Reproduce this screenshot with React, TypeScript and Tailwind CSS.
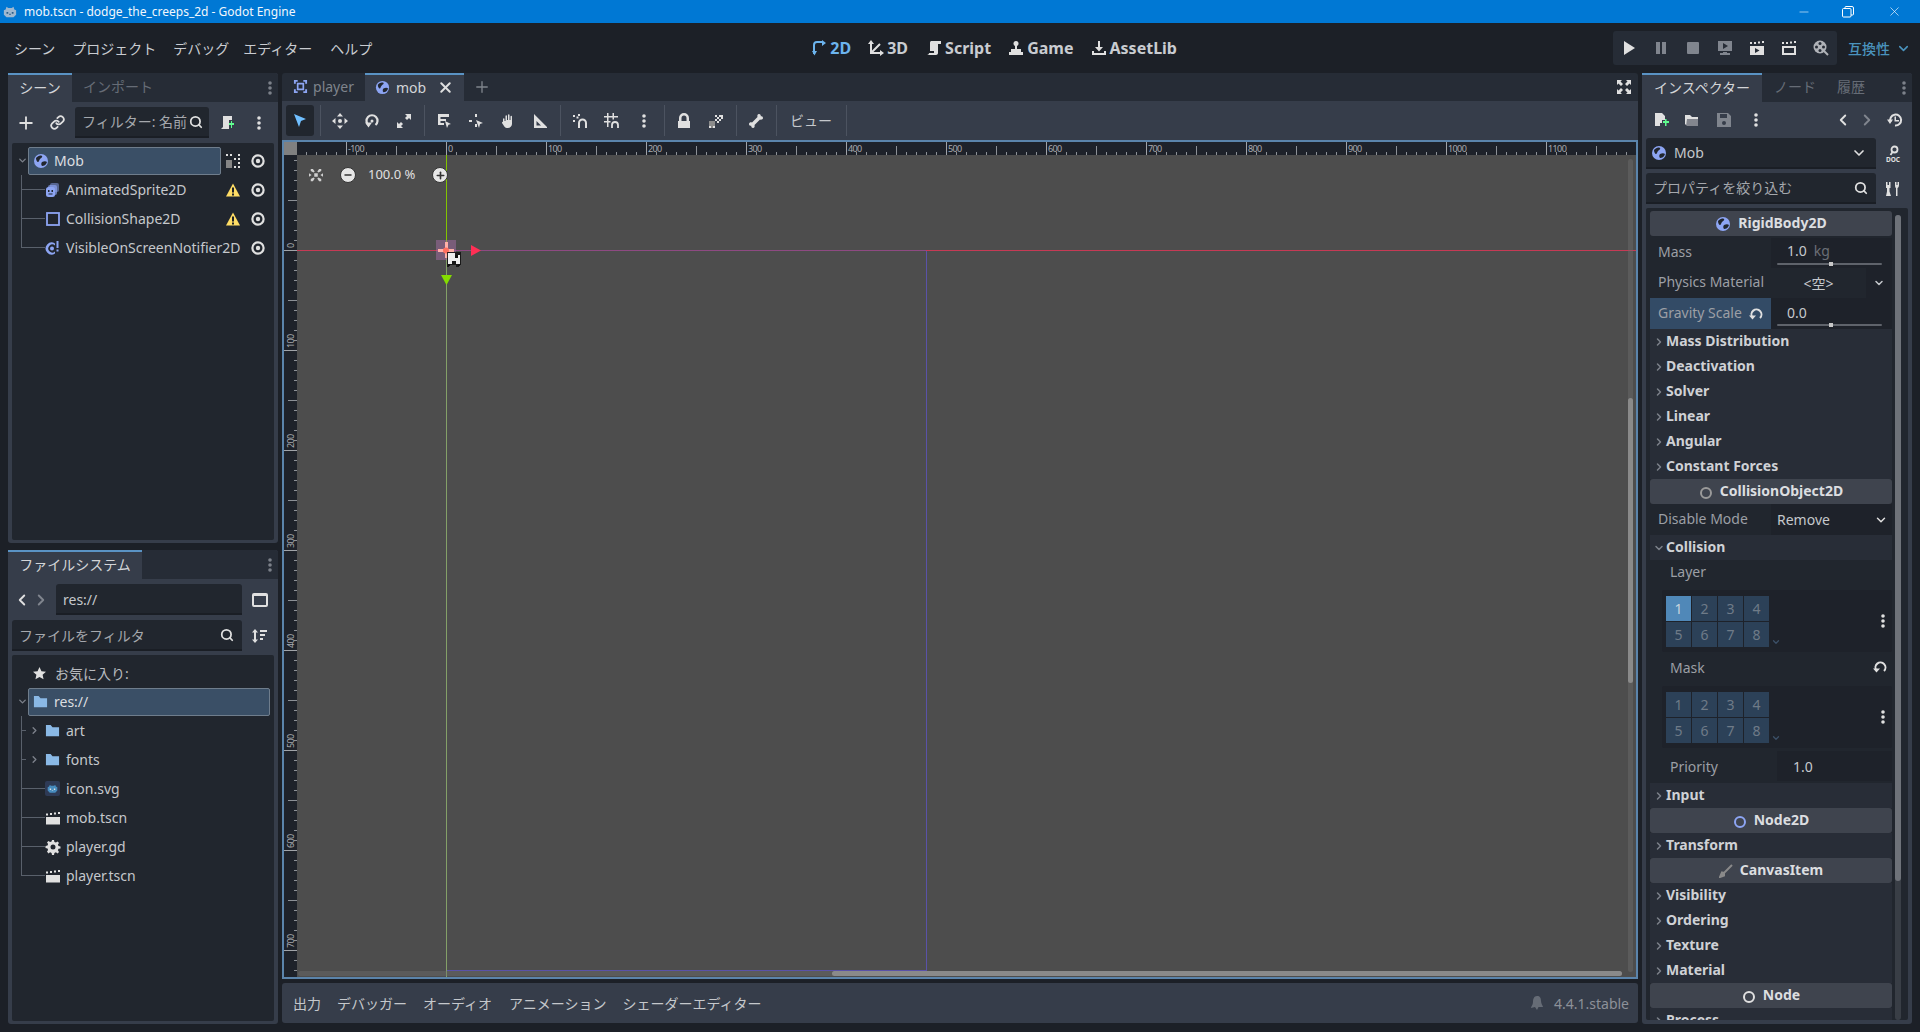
import React from "react";
import { ChevronDown, ChevronLeft, ChevronRight, Link, Minus, Plus, Search, X } from "lucide-react";

const jp = '"Noto Sans", "Noto Sans CJK JP", sans-serif';

type IconProps = { size?: number; fill?: string; children?: React.ReactNode };

const Ico = ({ size = 16, fill = "#e0e0e0", children }: IconProps) => (
  <svg width={size} height={size} viewBox="0 0 16 16" fill={fill} className="shrink-0">
    {children}
  </svg>
);

const Dots = ({ fill = "#e0e0e0" }: { fill?: string }) => (
  <Ico fill={fill}>
    <circle cx="8" cy="3" r="1.8" />
    <circle cx="8" cy="8" r="1.8" />
    <circle cx="8" cy="13" r="1.8" />
  </Ico>
);

const Eye = () => (
  <Ico>
    <circle cx="8" cy="8" r="5.6" fill="none" stroke="#e0e0e0" strokeWidth="2.2" />
    <circle cx="8" cy="8" r="2.2" />
  </Ico>
);

const Warn = () => (
  <Ico fill="#ffdd65">
    <path d="M8 1.5 15 14.5H1z" />
    <path d="M7 5.5h2v5H7zM7 11.5h2v2H7z" fill="#1c2027" />
  </Ico>
);

const Globe = ({ size = 16 }: { size?: number }) => (
  <Ico size={size} fill="#8da5f3">
    <circle cx="8" cy="8" r="7" />
    <path d="M3 5c2-2 4-3 6-2 1 1-1 2-2 3s-1 3-2 3-2-2-2-4zM9 9c2-1 4-1 5 0-1 3-3 4-5 4-1-1-1-3 0-4z" fill="#21262e" />
  </Ico>
);

const Folder = () => (
  <Ico fill="#8ab9e6" size={15}>
    <path d="M1 2h5l2 2.5h7V14H1z" />
  </Ico>
);

const Clap = () => (
  <Ico>
    <path d="M1 7h14v7.500H1z" />
    <path d="M1 3.500h2v2H1zM5 3h2v2H5zM9 2.500h2v2H9zM13 2h2v2h-2z" />
  </Ico>
);

const Gear = () => (
  <Ico>
    <path fillRule="evenodd" d="M7 1h2l.4 2 1.500.6L12.600 2.500 14 3.900l-1.100 1.700.6 1.400 2 .4v2l-2 .4-.6 1.500 1.100 1.700-1.400 1.400-1.700-1.100-1.500.6-.4 2H7l-.4-2-1.500-.6-1.700 1.100L2 12.600l1.100-1.700-.6-1.500-2-.4V7l2-.4.6-1.500L2 3.400 3.400 2l1.700 1.100L6.600 2.500zM8 5.500a2.500 2.500 0 1 0 0 5 2.500 2.500 0 0 0 0-5z" />
  </Ico>
);

const GodotIcon = () => (
  <div className="w-[15px] h-[15px] bg-[#2e3a55] rounded-[2px] flex items-center justify-center">
    <svg width="11" height="11" viewBox="0 0 16 16" fill="#478cbf">
      <path d="M1 6l2-1 1-2 2 1h4l2-1 1 2 2 1v5l-3 3H4l-3-3z" />
      <path d="M4 8h2v2H4zM10 8h2v2h-2zM7 10h2v1H7z" fill="#e0e0e0" />
    </svg>
  </div>
);

const Undo = ({ size = 16 }: { size?: number }) => (
  <Ico size={size}>
    <path d="M4.500 11.500A5 5 0 1 1 12 12" fill="none" stroke="#e0e0e0" strokeWidth="2" />
    <path d="M1 9.500h7l-3.500 4z" />
  </Ico>
);

const Field = ({ children, className }: { children: React.ReactNode; className: string }) => (
  <div className={`bg-[#21262e] border-b-2 border-[#1a1e25] rounded-t-[3px] flex items-center ${className}`}>{children}</div>
);

const PanelTabs = ({ children }: { children: React.ReactNode }) => (
  <div className="h-[29px] bg-[#262c36] flex items-stretch shrink-0 rounded-t-[3px]">{children}</div>
);

const ActiveTab = ({ label, w }: { label: string; w: string }) => (
  <div className={`${w} bg-[#363d4a] border-t-2 border-[#5a93c4] pb-[2px] flex items-center justify-center text-[#d3d5d8]`}>{label}</div>
);

const sceneNodes = [
  { label: "AnimatedSprite2D", last: false, warn: true, icon: "sprite" },
  { label: "CollisionShape2D", last: false, warn: true, icon: "shape" },
  { label: "VisibleOnScreenNotifier2D", last: true, warn: false, icon: "notifier" },
];

const NodeIcon = ({ kind }: { kind: string }) => {
  if (kind === "sprite")
    return (
      <Ico fill="#8da5f3">
        <rect x="5" y="1" width="9" height="9" rx="2" opacity=".5" />
        <rect x="3" y="3" width="9" height="10" rx="2" opacity=".7" />
        <rect x="1" y="5" width="9" height="10" rx="2.500" />
        <path d="M3 8h1.500v2H3zM6.500 8H8v2H6.500zM3.500 11.500h4v1h-4z" fill="#21262e" />
      </Ico>
    );
  if (kind === "shape")
    return (
      <Ico>
        <rect x="2" y="2" width="12" height="12" fill="none" stroke="#8da5f3" strokeWidth="1.800" />
      </Ico>
    );
  return (
    <Ico fill="#8da5f3">
      <path d="M10 3.500a6 6 0 1 0 0 10v-2a4 4 0 1 1 0-6z" />
      <circle cx="7" cy="8.500" r="2" />
      <path d="M11.500 1h2v7h-2zM11.500 9.500h2v2h-2z" />
    </Ico>
  );
};

const Guide = ({ last, x, w }: { last: boolean; x: number; w: number }) => (
  <svg width={w} height="29" className="shrink-0">
    <path d={`M${x}.5 0V${last ? 14.5 : 29}M${x} 14.5H${w}`} stroke="#59606b" fill="none" />
  </svg>
);

const SceneDock = () => (
  <div className="h-[470px] bg-[#363d4a] rounded-[3px] flex flex-col">
    <PanelTabs>
      <ActiveTab label="シーン" w="w-[64px]" />
      <div className="ml-[11px] pb-[2px] flex items-center text-[#666c76]">インポート</div>
      <div className="ml-auto flex items-center">
        <Dots fill="#7c818a" />
      </div>
    </PanelTabs>
    <div className="h-[41px] flex items-center pl-[8px] shrink-0">
      <Plus size={20} strokeWidth={2.200} color="#e0e0e0" className="mr-[14px]" />
      <Link size={15} strokeWidth={2.800} color="#e0e0e0" />
      <Field className="w-[134px] h-[31px] ml-[10px] pl-[7px] pr-[6px] justify-between overflow-hidden">
        <span className="text-[#a5a8ad] whitespace-nowrap">フィルター: 名前</span>
        <Search size={14} strokeWidth={3} color="#e0e0e0" className="shrink-0" />
      </Field>
      <div className="ml-[10px]">
        <svg width="16" height="16" viewBox="0 0 16 16" fill="#e0e0e0">
          <path d="M4 1h9v4h-3v9H2l2-2z" />
          <path d="M10 8h2V6h1v2h2v2h-2v3h-1v-3h-2z" fill="#5fff8f" />
        </svg>
      </div>
      <div className="ml-[16px]">
        <Dots />
      </div>
    </div>
    <div className="mx-[4px] bg-[#21262e] rounded-[2px] pt-[3px] flex-1">
      <div className="h-[29px] flex items-center">
        <div className="w-[16px] flex justify-end shrink-0">
          <ChevronDown size={11} strokeWidth={3} color="#7c818a" />
        </div>
        <div className="w-[193px] h-[28px] bg-[#3a4f66] border border-[#6f7d8c] rounded-[2px] flex items-center pl-[4px] gap-[5px] text-[#dcdee0] shrink-0">
          <Globe />
          Mob
        </div>
        <div className="ml-[4px] w-[16px]">
          <svg width="16" height="16" viewBox="0 0 16 16" fill="#e0e0e0">
            <path d="M1 1h2v2H1zM5 1h2v2H5zM13 1h2v2h-2zM9 5h2v2H9zM13 5h2v2h-2zM13 9h2v2h-2zM13 13h2v2h-2zM9 13h2v2H9z" />
            <path d="M1 7h6v8H1z" fill="#858585" />
          </svg>
        </div>
        <div className="ml-[9px]">
          <Eye />
        </div>
      </div>
      {sceneNodes.map((n) => (
        <div key={n.label} className="h-[29px] flex items-center text-[#c5c8cc]">
          <Guide last={n.last} x={9} w={33} />
          <NodeIcon kind={n.icon} />
          <span className="ml-[5px] w-[159px] shrink-0 whitespace-nowrap">{n.label}</span>
          <div className="w-[16px] shrink-0">{n.warn && <Warn />}</div>
          <div className="ml-[9px]">
            <Eye />
          </div>
        </div>
      ))}
    </div>
    <div className="h-[3px] shrink-0" />
  </div>
);

const files = [
  { label: "art", folder: true, last: false },
  { label: "fonts", folder: true, last: false },
  { label: "icon.svg", icon: <GodotIcon />, last: false },
  { label: "mob.tscn", icon: <Clap />, last: false },
  { label: "player.gd", icon: <Gear />, last: false },
  { label: "player.tscn", icon: <Clap />, last: true },
];

const FileDock = () => (
  <div className="flex-1 bg-[#363d4a] rounded-[3px] flex flex-col">
    <PanelTabs>
      <ActiveTab label="ファイルシステム" w="w-[134px]" />
      <div className="ml-auto flex items-center">
        <Dots fill="#7c818a" />
      </div>
    </PanelTabs>
    <div className="flex items-center h-[41px] shrink-0 pl-[5px]">
      <ChevronLeft size={18} strokeWidth={2.500} color="#e0e0e0" />
      <ChevronRight size={18} strokeWidth={2.500} color="#80858e" className="ml-[1px]" />
      <Field className="w-[186px] h-[31px] ml-[6px] pl-[7px] pt-[1px] text-[#c5c8cc]">res://</Field>
      <div className="ml-[10px] w-[16px] h-[14px] border-2 border-t-[3px] border-[#e0e0e0] rounded-[2px]" />
    </div>
    <div className="flex items-center h-[31px] shrink-0 pl-[4px]">
      <Field className="w-[230px] h-[31px] pl-[7px] pr-[8px] pt-[1px] justify-between text-[#a5a8ad]">
        ファイルをフィルタ
        <Search size={14} strokeWidth={3} color="#e0e0e0" />
      </Field>
      <svg width="16" height="16" viewBox="0 0 16 16" fill="#e0e0e0" className="ml-[10px]">
        <path d="M3 1l3 3.500H4v7h2L3 15 0 11.500h2v-7H0zM8 2h7v2H8zM8 6h5v2H8zM8 10h3v2H8z" />
      </svg>
    </div>
    <div className="mx-[4px] mt-[4px] mb-[3px] bg-[#21262e] rounded-[2px] pt-[4px] flex-1 text-[#c5c8cc]">
      <div className="h-[28px] flex items-center pl-[21px] gap-[9px] text-[#b7babf]">
        <Ico size={13}>
          <path d="M8 0l2.400 5.200 5.600.6-4.200 3.800 1.200 5.600L8 12.400 3 15.200l1.200-5.600L0 5.800l5.600-.6z" />
        </Ico>
        お気に入り:
      </div>
      <div className="h-[29px] flex items-center">
        <div className="w-[16px] flex justify-end shrink-0">
          <ChevronDown size={11} strokeWidth={3} color="#7c818a" />
        </div>
        <div className="w-[242px] h-[28px] bg-[#3a4f66] border border-[#6f7d8c] rounded-[2px] flex items-center pl-[4px] gap-[6px] text-[#dcdee0]">
          <Folder />
          res://
        </div>
      </div>
      {files.map((f) => (
        <div key={f.label} className="h-[29px] flex items-center">
          {f.folder ? (
            <div className="w-[33px] flex items-center shrink-0">
              <svg width="22" height="29" className="shrink-0">
                <path d="M9.500 0V29M9 14.500H14" stroke="#59606b" fill="none" />
              </svg>
              <ChevronRight size={11} strokeWidth={3} color="#7c818a" className="-ml-[5px]" />
            </div>
          ) : (
            <Guide last={f.last} x={9} w={33} />
          )}
          <div className="w-[15px] flex justify-center shrink-0">{f.folder ? <Folder /> : f.icon}</div>
          <span className="ml-[6px]">{f.label}</span>
        </div>
      ))}
    </div>
  </div>
);

const ToolBtn = ({ children, active }: { children: React.ReactNode; active?: boolean }) => (
  <div className="w-[32px] h-[39px] flex items-center justify-center shrink-0">
    {active ? <div className="w-[28px] h-[31px] bg-[#21262e] rounded-[3px] flex items-center justify-center">{children}</div> : children}
  </div>
);

const Sep = () => (
  <div className="w-[8px] h-[31px] flex justify-center shrink-0">
    <div className="w-[1px] bg-[#4c5360]" />
  </div>
);

const Toolbar = () => (
  <div className="h-[39px] bg-[#363d4a] flex items-center pl-[2px] shrink-0">
    <ToolBtn active>
      <Ico fill="#70bfff">
        <path d="M2 1l12 5-5 2-2 6z" />
      </Ico>
    </ToolBtn>
    <Sep />
    <ToolBtn>
      <Ico>
        <path d="M8 0l3 3.500H5zM8 16l-3-3.500h6zM0 8l3.500-3v6zM16 8l-3.500 3V5z" />
        <circle cx="8" cy="8" r="2" />
      </Ico>
    </ToolBtn>
    <ToolBtn>
      <Ico>
        <path d="M4.500 12A5.500 5.500 0 1 1 11.500 12" fill="none" stroke="#e0e0e0" strokeWidth="2.200" />
        <path d="M1 9.500h7l-3.500 5z" />
        <circle cx="8" cy="8" r="1.500" />
      </Ico>
    </ToolBtn>
    <ToolBtn>
      <Ico>
        <path d="M9 1h6v6l-2-2-2 2-2-2 2-2zM1 9l2 2 2-2 2 2-2 2 2 2H1z" />
      </Ico>
    </ToolBtn>
    <Sep />
    <ToolBtn>
      <Ico>
        <path d="M2 1h11v3H4.500v2H10v2H4.500v2H8v2H2z" />
        <path d="M9 8l6 3-2.500.8L11 15z" />
      </Ico>
    </ToolBtn>
    <ToolBtn>
      <Ico>
        <path d="M7 1h2v3H7zM1 7h3v2H1zM7 11h2v3H7z" />
        <path d="M8 7l7 3-3 1-1 4z" />
      </Ico>
    </ToolBtn>
    <ToolBtn>
      <Ico>
        <path d="M3 8V6c0-1 1.500-1 1.500 0v2h1V3c0-1 1.500-1 1.500 0v4h1V2c0-1 1.500-1 1.500 0v5h1V3.500c0-1 1.500-1 1.500 0V11c0 2-2 4-4 4H7c-2 0-3-2-5-5 0-1 .500-1.500 1-1z" />
      </Ico>
    </ToolBtn>
    <ToolBtn>
      <Ico>
        <path fillRule="evenodd" d="M2 1l13 13v1H2zM4.500 8v4.500H9z" />
      </Ico>
    </ToolBtn>
    <Sep />
    <ToolBtn>
      <Ico>
        <path d="M7 15v-5a3.500 3.500 0 0 1 7 0v5" fill="none" stroke="#e0e0e0" strokeWidth="2" />
        <path d="M1 2h2v2H1zM6 1h2v2H6zM1 7h2v2H1zM4.500 3.500h2v2h-2z" />
      </Ico>
    </ToolBtn>
    <ToolBtn>
      <Ico>
        <path d="M3 0h1.500v3h4V0H10v3h4v1.500h-4v2H8.500v-2h-4v3.500h2v1.500h-2V14H3V9.500H0V8h3V4.500H0V3h3z" />
        <path d="M8 15v-3a3 3 0 0 1 6 0v3" fill="none" stroke="#e0e0e0" strokeWidth="1.800" />
      </Ico>
    </ToolBtn>
    <ToolBtn>
      <Dots />
    </ToolBtn>
    <Sep />
    <ToolBtn>
      <Ico>
        <path d="M3 8V5a5 5 0 0 1 10 0v3h1v7H2V8zm2.500 0h5V5a2.500 2.500 0 0 0-5 0z" />
      </Ico>
    </ToolBtn>
    <ToolBtn>
      <Ico>
        <path d="M1 8h6v7H1z" fill="#8b8b8b" />
        <path d="M7 2h2v2H7zM11 2h4v2h-4zM9 4h2v2H9zM13 4h2v2h-2zM7 6h2v2H7zM11 6h2v2h-2zM9 8h2v2H9zM1 13h2v2H1zM5 13h2v2H5z" />
      </Ico>
    </ToolBtn>
    <Sep />
    <ToolBtn>
      <Ico>
        <path d="M11 1c1.500 0 1.800 1 1.800 2.200C14 3.200 15 3.500 15 5c0 1.500-1.800 2-3 1.500L6.500 12c.5 1.200 0 3-1.500 3-1.400 0-1.800-1-1.800-2.200C2 12.800 1 12.500 1 11c0-1.500 1.800-2 3-1.500L9.500 4C9 2.800 9.500 1 11 1z" />
      </Ico>
    </ToolBtn>
    <Sep />
    <div className="px-[10px] text-[#c5c8cc]">ビュー</div>
    <Sep />
  </div>
);

const major = (v: number) => v % 100 === 0;
const range = (from: number, to: number) => {
  const out: number[] = [];
  for (let v = from; v <= to; v += 10) out.push(v);
  return out;
};

const TopRuler = () => (
  <svg width="1339" height="13" className="block" fontFamily="Noto Sans" fontSize="9" fill="#a8abb0">
    {range(-140, 1180).map((v) => {
      const h = major(v) ? 13 : v % 50 === 0 ? 9 : 3;
      return <rect key={v} x={149 + v} y={13 - h} width="1" height={h} fill={major(v) ? "#a0a3a8" : "#8c9096"} />;
    })}
    {range(-100, 1100)
      .filter(major)
      .map((v) => (
        <text key={v} x={151 + v} y="10" letterSpacing="-.6">
          {v}
        </text>
      ))}
  </svg>
);

const LeftRuler = () => (
  <svg width="13" height="822" className="block shrink-0" fontFamily="Noto Sans" fontSize="9" fill="#a8abb0">
    {range(-90, 720).map((v) => {
      const w = major(v) ? 13 : v % 50 === 0 ? 9 : 3;
      return <rect key={v} x={13 - w} y={95 + v} width={w} height="1" fill={major(v) ? "#a0a3a8" : "#8c9096"} />;
    })}
    {range(0, 700)
      .filter(major)
      .map((v) => (
        <text key={v} transform={`translate(10 ${93 + v}) rotate(-90)`} letterSpacing="-.6">
          {v}
        </text>
      ))}
  </svg>
);

const Circle = ({ children }: { children: React.ReactNode }) => (
  <div className="w-[16px] h-[16px] rounded-full bg-[#e6e6e6] flex items-center justify-center border border-[#333]">{children}</div>
);

const Viewport = () => (
  <div className="h-[839px] border-2 border-[#5b84ab] shrink-0 flex flex-col overflow-hidden">
    <div className="h-[13px] flex shrink-0 bg-[#1e222a]">
      <div className="w-[13px] bg-[#808080] shrink-0" />
      <TopRuler />
    </div>
    <div className="flex flex-1 min-h-0">
      <div className="bg-[#1e222a] shrink-0">
        <LeftRuler />
      </div>
      <div className="relative flex-1 bg-[#4d4d4d]">
        <div className="absolute left-0 top-[95px] h-[1px] w-[149px] bg-[#c63a55]" />
        <div className="absolute left-[149px] top-[95px] h-[1px] w-[480px] bg-[#8e4a82]" />
        <div className="absolute left-[629px] top-[95px] h-[1px] right-0 bg-[#c63a55]" />
        <div className="absolute left-[149px] top-0 h-[95px] w-[1px] bg-[#82c400]" />
        <div className="absolute left-[149px] top-[96px] bottom-0 w-[1px] bg-[#84a068]" />
        <div className="absolute left-[629px] top-[96px] h-[720px] w-[1px] bg-[#5a52a8]" />
        <div className="absolute left-[150px] top-[815px] h-[1px] w-[479px] bg-[#5a52a8]" />
        <div className="absolute left-[139px] top-[85px]">
          <svg width="40" height="40" viewBox="0 0 40 40">
            <rect width="20" height="20" fill="#b070b0" opacity=".45" />
            <path d="M9 2h3v6H9zM9 12h3v6H9zM2 9h6v3H2zM12 9h6v3h-6z" fill="#ffb0a8" />
            <circle cx="10" cy="10.500" r="3" fill="#ff7060" />
            <path d="M11 12h14v13h-2v2h-3v-2h-7v2h-2z" fill="#111" opacity=".85" />
            <path d="M12 13h7v2h5v9h-4v-3h-4v3h-4z" fill="#eee" />
            <path d="M19 15h3v3h-3zM22 24h2v2h-2zM12 24h2v2h-2z" fill="#111" />
          </svg>
        </div>
        <div className="absolute left-[174px] top-[90px]">
          <svg width="11" height="11">
            <path d="M0 0l10 5.500L0 11z" fill="#ff2f55" />
          </svg>
        </div>
        <div className="absolute left-[144px] top-[120px]">
          <svg width="11" height="10">
            <path d="M0 0h11L5.500 10z" fill="#84dc00" />
          </svg>
        </div>
        <div className="absolute left-[12px] top-[12px] flex items-center h-[16px] text-[13px] text-[#e0e0e0]">
          <Ico size={14} fill="#d0d0d0">
            <path d="M2 1h2.500l2 3-1.200 1.200L2 3.500zM14 1h-2.500l-2 3 1.200 1.200L14 3.500zM2 15h2.500l2-3-1.200-1.200L2 12.500zM14 15h-2.500l-2-3 1.200-1.200 3.300 1.700z" />
            <path d="M0 6l3 2-3 2zM16 6l-3 2 3 2z" />
            <rect x="6" y="6" width="4" height="4" />
          </Ico>
          <div className="ml-[17px]">
            <Circle>
              <Minus size={10} strokeWidth={4} color="#333" />
            </Circle>
          </div>
          <span className="ml-[12px] w-[64px]">100.0 %</span>
          <Circle>
            <Plus size={11} strokeWidth={3.500} color="#333" />
          </Circle>
        </div>
        <div className="absolute left-[1px] right-[14px] top-[816px] h-[5px] bg-[#707070]/40 rounded-full">
          <div className="absolute left-[534px] right-0 h-[5px] rounded-full bg-[#8a8a8a]" />
        </div>
        <div className="absolute left-[1331px] top-[4px] bottom-[5px] w-[5px] bg-[#707070]/40 rounded-full">
          <div className="absolute top-[239px] h-[285px] w-[5px] rounded-full bg-[#8a8a8a]" />
        </div>
      </div>
    </div>
  </div>
);

const CenterColumn = () => (
  <div className="w-[1356px] flex flex-col shrink-0">
    <div className="h-[28px] bg-[#262c36] flex items-stretch shrink-0 rounded-t-[3px]">
      <div className="w-[83px] pb-[2px] flex items-center justify-center gap-[5px] text-[#7f848c]">
        <Ico size={15} fill="#8da5f3">
          <path d="M1 1h4v2H3v2H1zM11 1h4v4h-2V3h-2zM1 11h2v2h2v2H1zM13 11h2v4h-4v-2h2z" />
          <path d="M5 5h6v6H5z" fill="none" stroke="#8da5f3" strokeWidth="1.800" />
        </Ico>
        player
      </div>
      <div className="w-[99px] bg-[#363d4a] border-t-2 border-[#5a93c4] pb-[2px] flex items-center pl-[10px] text-[#d3d5d8]">
        <Globe size={15} />
        <span className="ml-[6px]">mob</span>
        <X size={17} strokeWidth={2.800} color="#e0e0e0" className="ml-[11px]" />
      </div>
      <div className="flex items-center ml-[9px]">
        <Plus size={18} strokeWidth={1.800} color="#7f848c" />
      </div>
      <div className="ml-auto flex items-center mr-[6px]">
        <Ico>
          <path d="M1 1h5L4.500 2.500 7 5 5 7 2.500 4.500 1 6zM15 1v5l-1.500-1.500L11 7 9 5l2.500-2.500L10 1zM1 15v-5l1.500 1.500L5 9l2 2-2.500 2.500L6 15zM15 15h-5l1.500-1.500L9 11l2-2 2.500 2.500L15 10z" />
        </Ico>
      </div>
    </div>
    <Toolbar />
    <Viewport />
    <div className="mt-[4px] h-[40px] bg-[#363d4a] rounded-[3px] flex items-center text-[#c5c8cc] shrink-0">
      <span className="ml-[11px]">出力</span>
      <span className="ml-[16px]">デバッガー</span>
      <span className="ml-[16px]">オーディオ</span>
      <span className="ml-[17px]">アニメーション</span>
      <span className="ml-[16px]">シェーダーエディター</span>
      <div className="ml-auto flex items-center mr-[9px] text-[#8d9199]">
        <Ico fill="#666c76">
          <path d="M8 1c3 0 4 2 4 5 0 3 2 5 2 6H9.500L8 15 6 12l-4 1c0-2 2-3 2-6s1-6 4-6z" />
        </Ico>
        <span className="ml-[9px]">4.4.1.stable</span>
      </div>
    </div>
  </div>
);

const Header = ({ icon, label }: { icon: React.ReactNode; label: string }) => (
  <div className="h-[25px] bg-[#3f444e] rounded-[3px] flex items-center justify-center gap-[7px] font-bold text-[#dcdee0] shrink-0">
    {icon}
    <span className="pb-[2px]">{label}</span>
  </div>
);

const Section = ({ label, open }: { label: string; open?: boolean }) => (
  <div className="h-[25px] bg-[#282d37] flex items-center font-bold text-[#cfd1d5] shrink-0 pl-[3px]">
    {open ? <ChevronDown size={12} strokeWidth={3} color="#7c818a" /> : <ChevronRight size={12} strokeWidth={3} color="#7c818a" />}
    <span className="ml-[1px] pb-[3px]">{label}</span>
  </div>
);

const Label = ({ children }: { children: React.ReactNode }) => <div className="text-[#9c9fa5] pl-[8px] pb-[3px]">{children}</div>;

const Slider = () => (
  <div className="relative ml-[6px] mr-[10px] mt-[1px] h-[2px] bg-[#5f636b] rounded">
    <div className="absolute left-[52px] -top-[1px] w-[4px] h-[4px] bg-[#c8c8c8]" />
  </div>
);

const LayerGrid = ({ active }: { active?: boolean }) => (
  <div className="h-[62px] ml-[12px] bg-[#1e222a] rounded-[2px] flex items-center pl-[4px] pr-[1px] shrink-0">
    <div className="grid grid-cols-4 gap-[1px] w-[103px] text-[#6f7b88]">
      {[1, 2, 3, 4, 5, 6, 7, 8].map((n) => (
        <div key={n} className={`h-[25px] flex items-center justify-center ${active && n === 1 ? "bg-[#5088b8] text-[#c8d4de]" : "bg-[#2c4158]"}`}>
          {n}
        </div>
      ))}
    </div>
    <ChevronDown size={10} strokeWidth={3} color="#3c5068" className="self-end mb-[5px] ml-[2px]" />
    <div className="ml-auto">
      <Dots />
    </div>
  </div>
);

const Inspector = () => (
  <div className="w-[270px] bg-[#363d4a] rounded-[3px] flex flex-col shrink-0">
    <PanelTabs>
      <ActiveTab label="インスペクター" w="w-[120px]" />
      <div className="ml-[12px] pb-[2px] flex items-center text-[#666c76]">ノード</div>
      <div className="ml-[21px] pb-[2px] flex items-center text-[#666c76]">履歴</div>
      <div className="ml-auto flex items-center">
        <Dots fill="#7c818a" />
      </div>
    </PanelTabs>
    <div className="h-[36px] flex items-center pl-[11px] pr-[9px] shrink-0">
      <svg width="16" height="16" viewBox="0 0 16 16" fill="#e0e0e0" className="shrink-0">
        <path d="M2 1h7l3 3v4H9v3H7v3H2z" />
        <path d="M10 9h2V7h1.500v2H16v2h-2.500v3H12v-3h-2z" fill="#5fff8f" />
      </svg>
      <div className="ml-[15px]">
        <Ico>
          <path d="M1 3h5l2 2h6v9H3L1 12z" />
          <path d="M3 7h13l-2 7H2z" fill="#363d4a" opacity=".55" />
        </Ico>
      </div>
      <div className="ml-[16px]">
        <Ico fill="#80858e">
          <path fillRule="evenodd" d="M1 1h11l3 3v11H1zM4 2v4h7V2zM8 9a2 2 0 1 0 0 4 2 2 0 0 0 0-4z" />
        </Ico>
      </div>
      <div className="ml-[16px]">
        <Dots />
      </div>
      <ChevronLeft size={18} strokeWidth={2.500} color="#e0e0e0" className="ml-auto" />
      <ChevronRight size={18} strokeWidth={2.500} color="#80858e" className="ml-[6px]" />
      <div className="ml-[11px]">
        <Ico>
          <path d="M3.500 10A5.500 5.500 0 1 1 8 13.500" fill="none" stroke="#e0e0e0" strokeWidth="2" />
          <path d="M0 7.500h6L3 12zM7.500 4.500H9v3.500h3v1.500H7.500z" />
        </Ico>
      </div>
    </div>
    <div className="flex items-center pl-[4px] h-[31px] shrink-0">
      <Field className="w-[230px] h-[31px] pl-[5px] pr-[9px] text-[#c5c8cc]">
        <Globe />
        <span className="ml-[7px]">Mob</span>
        <ChevronDown size={16} strokeWidth={2.500} color="#e0e0e0" className="ml-auto" />
      </Field>
      <div className="ml-[9px]">
        <svg width="16" height="18" viewBox="0 0 16 18" fill="#e0e0e0">
          <circle cx="9.500" cy="4.500" r="3" fill="none" stroke="#e0e0e0" strokeWidth="1.800" />
          <path d="M7.500 7l-2 3" stroke="#e0e0e0" strokeWidth="1.800" />
          <text x="8" y="16.500" fontSize="6.500" fontWeight="700" textAnchor="middle" fontFamily="Noto Sans">
            DOC
          </text>
        </svg>
      </div>
    </div>
    <div className="flex items-center pl-[4px] h-[31px] mt-[4px] shrink-0">
      <Field className="w-[230px] h-[31px] pl-[7px] pr-[8px] justify-between text-[#a5a8ad]">
        プロパティを絞り込む
        <Search size={14} strokeWidth={3} color="#e0e0e0" />
      </Field>
      <div className="ml-[9px]">
        <Ico>
          <path d="M1 1h1.500v3H4V1h1.500v6H4.500v3.500L6 15H1l1-4.500V7H1zM10 1h1.500v3h1V1H14v3c0 2-1 3-1.500 3v8H11V7c-.5 0-1-1-1-3z" />
        </Ico>
      </div>
    </div>
    <div className="mx-[4px] mt-[4px] mb-[4px] flex-1 min-h-0 bg-[#21262e] rounded-[2px] flex pl-[4px] pt-[3px] overflow-hidden text-[#c5c8cc]">
      <div className="w-[242px] flex flex-col shrink-0">
        <Header icon={<Globe />} label="RigidBody2D" />
        <div className="h-[31px] mt-[1px] flex items-center shrink-0">
          <div className="w-[121px]">
            <Label>Mass</Label>
          </div>
          <div className="w-[121px] h-[30px] bg-[#1e222a] pt-[2px]">
            <div className="h-[22px] flex items-center pl-[16px] gap-[7px]">
              1.0 <span className="text-[#6b6f76]">kg</span>
            </div>
            <Slider />
          </div>
        </div>
        <div className="h-[30px] flex items-center shrink-0">
          <div className="w-[121px]">
            <Label>Physics Material</Label>
          </div>
          <div className="w-[95px] text-center text-[#c5c8cc]">&lt;空&gt;</div>
          <div className="w-[26px] h-[30px] bg-[#1e222a] flex items-center justify-center">
            <ChevronDown size={12} strokeWidth={3} color="#c5c8cc" />
          </div>
        </div>
        <div className="h-[31px] flex items-center shrink-0">
          <div className="w-[121px] h-[31px] bg-[#334b66] flex items-center justify-between pr-[7px]">
            <Label>Gravity Scale</Label>
            <Undo />
          </div>
          <div className="w-[121px] h-[31px] bg-[#1e222a] pt-[4px]">
            <div className="h-[21px] flex items-center pl-[16px]">0.0</div>
            <Slider />
          </div>
        </div>
        <Section label="Mass Distribution" />
        <Section label="Deactivation" />
        <Section label="Solver" />
        <Section label="Linear" />
        <Section label="Angular" />
        <Section label="Constant Forces" />
        <Header
          icon={
            <svg width="14" height="14" className="mt-[2px]">
              <circle cx="7" cy="7" r="5" fill="none" stroke="#9a9a9a" strokeWidth="2" />
            </svg>
          }
          label="CollisionObject2D"
        />
        <div className="h-[31px] flex items-center shrink-0">
          <div className="w-[121px]">
            <Label>Disable Mode</Label>
          </div>
          <div className="w-[121px] h-[31px] bg-[#1e222a] flex items-center pl-[6px] pr-[4px] justify-between">
            Remove
            <ChevronDown size={14} strokeWidth={2.500} color="#e0e0e0" />
          </div>
        </div>
        <Section label="Collision" open />
        <div className="h-[30px] flex items-center pl-[20px] pb-[7px] text-[#9c9fa5] shrink-0">Layer</div>
        <LayerGrid active />
        <div className="h-[34px] flex items-center justify-between pl-[20px] pr-[4px] pb-[4px] text-[#9c9fa5] shrink-0">
          Mask
          <Undo />
        </div>
        <LayerGrid />
        <div className="h-[35px] pt-[3px] flex items-start shrink-0">
          <div className="w-[127px] h-[30px] flex items-center pl-[20px] text-[#9c9fa5]">Priority</div>
          <div className="w-[115px] h-[30px] bg-[#1e222a] flex items-center pl-[16px]">1.0</div>
        </div>
        <Section label="Input" />
        <Header
          icon={
            <svg width="14" height="14" className="mt-[2px]">
              <circle cx="7" cy="7" r="5" fill="none" stroke="#8da5f3" strokeWidth="2" />
            </svg>
          }
          label="Node2D"
        />
        <Section label="Transform" />
        <Header
          icon={
            <svg width="14" height="14" viewBox="0 0 14 14">
              <path d="M13 1L5 9l-2-.5L1 13l4-1.500L5 9" fill="#8a8a8a" stroke="#8a8a8a" strokeWidth="2" />
            </svg>
          }
          label="CanvasItem"
        />
        <Section label="Visibility" />
        <Section label="Ordering" />
        <Section label="Texture" />
        <Section label="Material" />
        <Header
          icon={
            <svg width="14" height="14" className="mt-[2px]">
              <circle cx="7" cy="7" r="5" fill="none" stroke="#e0e0e0" strokeWidth="2" />
            </svg>
          }
          label="Node"
        />
        <Section label="Process" />
      </div>
      <div className="ml-[3px] w-[6px] bg-[#5f636b]/40 rounded-full mt-[4px]">
        <div className="h-[666px] w-[6px] bg-[#6e7279] rounded-full" />
      </div>
    </div>
  </div>
);

const runIcons = [
  <Ico key="play"><path d="M3 1l11 7-11 7z" /></Ico>,
  <Ico key="pause" fill="#80858e"><path d="M3 2h4v12H3zM9 2h4v12H9z" /></Ico>,
  <Ico key="stop" fill="#80858e"><rect x="2" y="2" width="12" height="12" rx="1" /></Ico>,
  <Ico key="remote" fill="#80858e"><path d="M1 1h14v10H1zM6 12h4v1h3v2H3v-2h3z" /><path d="M6 3l5 3-5 3z" fill="#262c36" /></Ico>,
  <Ico key="scene"><path d="M1 6h14v9H1zM1 2h2v2H1zM5 2h2v2H5zM9 1.500h2v2H9zM13 1h2v2h-2z" /><path d="M6 8l4.500 2.500L6 13z" fill="#262c36" /></Ico>,
  <Ico key="custom"><path fillRule="evenodd" d="M1 6h14v9H1zM3 8v5h10V8zM1 2h2v2H1zM5 2h2v2H5zM9 1.500h2v2H9zM13 1h2v2h-2z" /></Ico>,
  <Ico key="movie" fill="#b0b3b8"><circle cx="7" cy="7" r="6.500" /><path d="M11 11l4 4" stroke="#b0b3b8" strokeWidth="2" /><circle cx="7" cy="3.500" r="1.500" fill="#262c36" /><circle cx="3.500" cy="7" r="1.500" fill="#262c36" /><circle cx="10.500" cy="7" r="1.500" fill="#262c36" /><circle cx="7" cy="10.500" r="1.500" fill="#262c36" /></Ico>,
];

const TitleBar = () => (
  <div className="h-[23px] bg-[#0078d4] flex items-center shrink-0 text-[12px] text-[#f2f7fc]">
    <svg width="14" height="14" viewBox="0 0 16 16" fill="#9fb8d0" className="ml-[3px]">
      <path d="M1 6l2-1 1-3 2 1.500h4L12 2l1 3 2 1v5l-3 3H4l-3-3z" />
      <path d="M4 8h2v2H4zM10 8h2v2h-2zM7 10h2v1H7z" fill="#2d5f88" />
    </svg>
    <span className="ml-[7px]">mob.tscn - dodge_the_creeps_2d - Godot Engine</span>
    <div className="ml-auto flex items-center">
      <Minus size={14} strokeWidth={1} color="#ffffff" className="mr-[31px]" />
      <svg width="12" height="12" viewBox="0 0 12 12" fill="none" stroke="#ffffff" className="mr-[33px]">
        <rect x=".5" y="2.500" width="8.500" height="8.500" rx="1" />
        <path d="M3 2.500V1.500a1 1 0 0 1 1-1h6a1.500 1.500 0 0 1 1.500 1.500v6a1 1 0 0 1-1 1H9" />
      </svg>
      <X size={15} strokeWidth={1} color="#ffffff" className="mr-[18px]" />
    </div>
  </div>
);

const MenuBar = () => (
  <div className="h-[50px] flex items-center shrink-0 text-[#c9ccd1]">
    <span className="ml-[14px]">シーン</span>
    <span className="ml-[17px]">プロジェクト</span>
    <span className="ml-[17px]">デバッグ</span>
    <span className="ml-[14px]">エディター</span>
    <span className="ml-[18px]">ヘルプ</span>
    <div className="ml-[440px] flex items-center text-[16px] font-bold text-[#c9ccd1]">
      <div className="flex items-center gap-[2px] text-[#6cb4ee]">
        <Ico fill="#6cb4ee">
          <path d="M2 14V5a3 3 0 0 1 3-3h5" fill="none" stroke="#6cb4ee" strokeWidth="2" />
          <path d="M10 0l4 3-4 3zM0 11h5l-2.500 4.500z" />
        </Ico>
        2D
      </div>
      <div className="ml-[17px] flex items-center gap-[3px]">
        <Ico>
          <path d="M3 14V3M3 13h10M3 13l9-9" fill="none" stroke="#e0e0e0" strokeWidth="2" />
          <path d="M3 0l3 4H0zM16 13l-4 3v-6z" />
        </Ico>
        3D
      </div>
      <div className="ml-[18px] flex items-center gap-[3px]">
        <Ico>
          <path d="M5 1h10v3h-3v9c0 1-1 2-2 2H1c1 0 2-1 2-2h5V11H4V3c0-1 .5-2 1-2z" />
        </Ico>
        Script
      </div>
      <div className="ml-[17px] flex items-center gap-[3px]">
        <Ico>
          <circle cx="8" cy="3.500" r="2.500" />
          <path d="M7 5h2v5H7zM3 9h10v3H3zM1 12h14v3H1z" />
        </Ico>
        Game
      </div>
      <div className="ml-[17px] flex items-center gap-[3px]">
        <Ico>
          <path d="M7 1h2v6h3l-4 4.500L4 7h3zM1 11h2v2h10v-2h2v4H1z" />
        </Ico>
        AssetLib
      </div>
    </div>
    <div className="ml-auto w-[224px] h-[34px] bg-[#262c36] rounded-[3px] flex items-center">
      {runIcons.map((icon) => (
        <div key={icon.key} className="w-[32px] flex items-center justify-center">
          {icon}
        </div>
      ))}
    </div>
    <span className="ml-[11px] text-[#4a93bd] font-medium">互換性</span>
    <ChevronDown size={15} strokeWidth={2.500} color="#4a93bd" className="ml-[6px] mr-[9px]" />
  </div>
);

export default function App() {
  return (
    <div className="relative w-[1920px] h-[1032px] bg-[#1c2027] flex flex-col overflow-hidden text-[14px]" style={{ fontFamily: jp }}>
      <TitleBar />
      <MenuBar />
      <div className="flex gap-[4px] pl-[8px] h-[951px]">
        <div className="w-[270px] flex flex-col gap-[7px] shrink-0">
          <SceneDock />
          <FileDock />
        </div>
        <CenterColumn />
        <Inspector />
      </div>
    </div>
  );
}
